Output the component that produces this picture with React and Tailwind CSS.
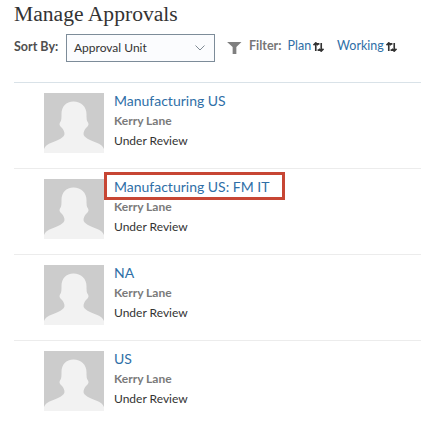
const rows = [
  { name: "Manufacturing US" },
  { name: "Manufacturing US: FM IT", boxed: true },
  { name: "NA" },
  { name: "US" },
];

function Avatar() {
  return (
    <svg width="60" height="60" viewBox="0 0 60 60" className="block shrink-0">
      <rect width="60" height="60" fill="#cccccc" />
      <path
        d="M29.500 8.500C22 8.500 17.500 13.500 17.500 21C17.500 25 17.500 28 16 29.500C15 31 15.500 33 17.500 34.500C19.500 36.500 20.500 39 20.500 41C20.500 44 15 47 8 49.500C3.500 51 1 53 0 56V60H60V56C59 53 56.500 51 52 49.500C45 47 39.500 44 39.500 41C39.500 39 40.500 36.500 42.500 34.500C44.500 33 45 31 44 29.500C42.500 28 42.500 25 42.500 21C42.500 13.500 37 8.500 29.500 8.500Z"
        fill="#f2f2f2"
      />
    </svg>
  );
}

function SortIcon() {
  return (
    <svg width="11" height="10" viewBox="0 0 12 11" className="ml-[2px] shrink-0" fill="none" stroke="#333333" strokeWidth="1.8">
      <path d="M3 10V2H7" />
      <path d="M0.500 3.500L3 1L5.500 3.500" />
      <path d="M9 1V9H5" />
      <path d="M6.500 7.500L9 10L11.500 7.500" />
    </svg>
  );
}

export default function App() {
  return (
    <div className="w-[421px] h-[423px] overflow-hidden bg-white pl-[14px] font-['Lato','Noto_Sans',sans-serif]">
      <h1 className="font-['Liberation_Serif',serif] text-[21.6px] leading-[28px] text-[#333333] font-normal">
        Manage Approvals
      </h1>
      <div className="flex items-center mt-[6px] h-[27px]">
        <span className="text-[12.5px] font-bold text-[#4f4f4f] w-[52px]">Sort By:</span>
        <div className="w-[149px] h-[28px] border border-[#7d8c99] bg-[#fbfcfe] flex items-center justify-between pl-[7px] pr-[9px] text-[12px] text-[#333333]">
          <span>Approval Unit</span>
          <svg width="10" height="6" viewBox="0 0 10 6" fill="none" stroke="#7f8a94" strokeWidth="1">
            <path d="M0.500 0.500L5 5L9.500 0.500" />
          </svg>
        </div>
        <svg width="15" height="13" viewBox="0 0 16 14" className="ml-[12px] shrink-0" fill="#7f7f7f">
          <path d="M0 1H15.500L10 6.500V14H6V6.500Z" />
        </svg>
        <span className="ml-[7px] text-[12.5px] font-bold text-[#777777] -translate-y-[1px]">Filter:</span>
        <span className="ml-[6px] text-[12.5px] text-[#2f6fa7] flex items-center -translate-y-[1px]">Plan<SortIcon /></span>
        <span className="ml-[13px] text-[12.5px] text-[#2f6fa7] flex items-center -translate-y-[1px]">Working<SortIcon /></span>
      </div>
      <div className="h-px bg-[#d9e2e8] mt-[21px]" />
      <div className="pt-[10px]">
        {rows.map((r, i) => (
          <div key={r.name}>
            <div className="flex pl-[30px] h-[60px]">
              <Avatar />
              <div className="ml-[10px] flex flex-col">
                <div className="relative text-[14px] leading-[18px] text-[#2f6fa7] -mt-[1px]">
                  {r.name}
                  {r.boxed && (
                    <div className="absolute -left-[10px] -top-[6px] w-[181px] h-[28px] border-[3px] border-[#c74634]" />
                  )}
                </div>
                <div className="text-[12px] leading-[14px] font-bold text-[#7a7a7a] mt-[4px]">Kerry Lane</div>
                <div className="text-[12px] leading-[14px] text-[#333333] mt-[6px]">Under Review</div>
              </div>
            </div>
            {i < rows.length - 1 && <div className="h-px bg-[#ececec] mt-[15px] mb-[10px]" />}
          </div>
        ))}
      </div>
    </div>
  );
}
